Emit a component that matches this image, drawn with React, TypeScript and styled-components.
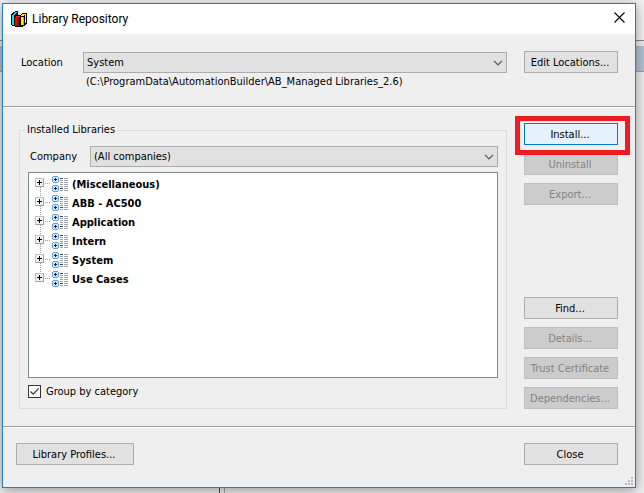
import React, { useState } from 'react';
import styled, { createGlobalStyle, css } from 'styled-components';

const uiFont = '"DejaVu Sans Condensed", "Noto Sans", sans-serif';

const GlobalStyle = createGlobalStyle`
  *, *::before, *::after { box-sizing: border-box; }
  body {
    margin: 0;
    color: #000;
    background: #efefef;
    font: 11px/14px ${uiFont};
  }
`;

const Desktop = styled.div`
  display: grid;
  grid-template: minmax(100vh, auto) / minmax(0, 1fr);
  overflow: hidden;
  > * { grid-area: 1 / 1; }
`;

const Backdrop = styled.div`
  display: flex;
  flex-direction: column;
`;

const BackToolbar = styled.div`
  height: 41px;
  border-bottom: 1px solid #84848a;
  background: #f4f4f4;
`;

const BackTabs = styled.div`
  height: 25px;
  margin-top: 5px;
  background: #b4c3d4;
`;

const BackPanes = styled.div`
  display: grid;
  grid-template-columns: 220px 4px 1fr;
  flex: 1;
  border-top: 1px solid #a0a0a0;
`;

const BackPane = styled.div<{ $edge?: 'left' | 'right' }>`
  ${p => p.$edge === 'left' && css`border-left: 1px solid #a8a8a8;`}
  ${p => p.$edge === 'right' && css`border-right: 1px solid #505050;`}
`;

const Dialog = styled.main`
  display: flex;
  flex-direction: column;
  margin: 3px 8px 5px 2px;
  border: 1px solid #1a7fcf;
  background: #efefef;
  box-shadow: 0 2px 12px rgba(0, 0, 0, 0.4);
`;

const TitleBar = styled.header`
  display: flex;
  align-items: center;
  height: 30px;
  padding: 0 8px;
  gap: 5px;
  background: #fff;
`;

const Title = styled.h1`
  flex: 1;
  margin: 0;
  font: 12px/16px Roboto, "Noto Sans", sans-serif;
`;

const CloseIconButton = styled.button`
  display: flex;
  padding: 0 2px 3px;
  border: 0;
  background: none;
`;

const Section = styled.section`
  display: grid;
  grid-template-columns: minmax(0, 1fr) 94px;
  column-gap: 17px;
  padding: 17px 17px 16px 16px;
  border-bottom: 1px solid #fff;
  box-shadow: inset 0 -1px #a0a0a0;
`;

const LocationSection = styled(Section)`
  height: 74px;
`;

const MainSection = styled(Section)`
  flex: 1;
  padding-top: 15px;
  padding-bottom: 18px;
`;

const Footer = styled.footer`
  position: relative;
  display: flex;
  justify-content: space-between;
  padding: 15px 17px 22px 13px;
`;

const Field = styled.div<{ $labelWidth: number }>`
  display: grid;
  grid-template-columns: ${p => p.$labelWidth}px minmax(0, 1fr);
  align-items: center;
`;

const LocationField = styled(Field)`
  padding: 1px 0 0 2px;
  align-content: start;
`;

const Path = styled.div`
  grid-column: 2;
  padding: 2px 3px;
`;

const SelectBox = styled.div`
  position: relative;
  display: flex;
  svg {
    position: absolute;
    right: 4px;
    top: 8px;
    pointer-events: none;
  }
`;

const Select = styled.select`
  width: 100%;
  height: 21px;
  padding: 1px 16px 0 3px;
  appearance: none;
  border: 1px solid #acacac;
  border-radius: 0;
  background: #e1e1e1;
  color: #000;
  font: inherit;
`;

const Button = styled.button<{ $primary?: boolean; $wide?: boolean }>`
  width: ${p => (p.$wide ? 118 : 94)}px;
  height: 22px;
  padding: 2px 2px 0 0;
  border: 1px solid ${p => (p.$primary ? '#0078d7' : '#adadad')};
  background: ${p => (p.$primary ? '#e5f1fb' : '#e1e1e1')};
  color: #000;
  font: inherit;
  white-space: nowrap;
  &:disabled {
    border-color: #bfbfbf;
    background: #ccc;
    color: #838383;
  }
`;

const Actions = styled.div`
  display: flex;
  flex-direction: column;
  justify-content: space-between;
`;

const ButtonGroup = styled.div`
  display: grid;
  gap: 8px;
`;

const Highlight = styled.div`
  position: relative;
  display: flex;
  &::after {
    content: '';
    position: absolute;
    inset: -7px -12px -10px -9px;
    border: 5px solid #ed1c24;
    pointer-events: none;
  }
`;

const Group = styled.fieldset`
  display: flex;
  flex-direction: column;
  min-width: 0;
  margin: 0;
  padding: 9px 8px 10px;
  border: 1px solid #dcdcdc;
`;

const Legend = styled.legend`
  margin-left: -3px;
  padding: 0 2px;
`;

const CompanyField = styled(Field)`
  padding-left: 2px;
`;

const Tree = styled.ul`
  flex: 1;
  margin: 5px 0 7px;
  padding: 1px 6px;
  border: 1px solid #828790;
  background: #fff;
  list-style: none;
`;

const TreeRow = styled.li`
  display: flex;
  align-items: center;
  height: 19px;
  font-weight: bold;
`;

const Expander = styled.button`
  display: flex;
  width: 17px;
  height: 19px;
  padding: 0;
  border: 0;
  background: none;
`;

const RowText = styled.span`
  padding: 2px 0 0 4px;
`;

const CheckLabel = styled.label`
  display: flex;
  align-items: center;
  gap: 5px;
  height: 13px;
`;

const CheckBox = styled.input`
  width: 13px;
  height: 13px;
  margin: 0;
  appearance: none;
  border: 1px solid #333;
  background: #fff;
  &:checked {
    background: #fff
      url("data:image/svg+xml,%3Csvg xmlns='http://www.w3.org/2000/svg' viewBox='0 0 11 11'%3E%3Cpath d='M1.5 5.5l2.7 2.7L9.7 2.3' fill='none' stroke='%23333' stroke-width='1.2'/%3E%3C/svg%3E");
  }
`;

const Grip = styled.svg`
  position: absolute;
  right: 2px;
  bottom: 2px;
`;

const Chevron = () => (
  <svg width="10" height="6" viewBox="0 0 10 6" aria-hidden="true">
    <path d="M1 .8l4 4 4-4" fill="none" stroke="#555" strokeWidth="1.2" />
  </svg>
);

const BooksIcon = () => (
  <svg width="16" height="16" viewBox="0 0 16 16" shapeRendering="crispEdges" aria-hidden="true">
    <path d="M0 3h1V2h1V1h2V0h3v4h3V3h1V2h5v11h-1v1h-1v1h-2v1H4v-1H1v-1H0z" fill="#000" />
    <path d="M1 4h2v10H1zM2 3h1V2h1V1h2v1H5v1H4v1H2z" fill="#00e8f0" />
    <path d="M4 6h4v9H4z" fill="#e8000c" />
    <path d="M5 5h4v1H5z" fill="#ff2020" />
    <path d="M7 7h1v8H7z" fill="#900000" />
    <path d="M9 6h4v8H9zM10 4h3v1h-3zM11 3h4v1h-4zM14 4h1v8h-1z" fill="#fff200" />
    <path d="M9 6h1v8H9zM13 5h1v9h-1z" fill="#000" />
    <path d="M12 6h1v8h-1z" fill="#c8b800" />
  </svg>
);

const ExpandIcon = ({ first, last }: { first: boolean; last: boolean }) => (
  <svg width="17" height="19" viewBox="0 0 17 19" shapeRendering="crispEdges" aria-hidden="true">
    {!first && <path d="M5.5 0v4" stroke="#a0a0a0" strokeDasharray="1 1" />}
    {!last && <path d="M5.5 13v6" stroke="#a0a0a0" strokeDasharray="1 1" />}
    <path d="M10 9.500h5" stroke="#a0a0a0" strokeDasharray="1 1" />
    <path d="M0 4h9v9H0z" fill="#b1c9c8" />
    <path d="M1 5h7v7H1z" fill="#f3f3ef" />
    <path d="M8 5h1v8H1v-1h7z" fill="#9aa6a6" />
    <path d="M2 8h5v1H2zM4 6h1v5H4z" fill="#000" />
  </svg>
);

const LibraryIcon = () => (
  <svg width="16" height="16" viewBox="0 0 16 16" shapeRendering="crispEdges" aria-hidden="true">
    {[0, 9].map(y => (
      <g key={y} transform={`translate(0 ${y})`}>
        <path d="M1 0h5v1h1v5H6v1H1V6H0V1h1z" fill="#6f9fd2" />
        <path d="M1 1h5v5H1z" fill="#cfe3fa" />
        <path d="M2 3h3v1H2zM3 2h1v3H3z" fill="#0c2040" />
      </g>
    ))}
    <path d="M8 2h3v1H8zM8 12h3v1H8z" fill="#444" />
    <path d="M8 4h3v1H8zM12 2h4v1h-4zM12 4h4v1h-4zM8 6h3v1H8zM12 6h4v1h-4zM8 8h3v1H8zM12 8h4v1h-4zM8 10h3v1H8zM12 10h4v1h-4zM12 12h4v1h-4zM8 14h3v1H8zM12 14h4v1h-4z" fill="#9ca3b0" />
  </svg>
);

const categories = ['(Miscellaneous)', 'ABB - AC500', 'Application', 'Intern', 'System', 'Use Cases'];

export default function App() {
  const [grouped, setGrouped] = useState(true);
  return (
    <Desktop>
      <GlobalStyle />
      <Backdrop aria-hidden="true">
        <BackToolbar />
        <BackTabs />
        <BackPanes>
          <BackPane $edge="right" />
          <BackPane />
          <BackPane $edge="left" />
        </BackPanes>
      </Backdrop>
      <Dialog>
        <TitleBar>
          <BooksIcon />
          <Title>Library Repository</Title>
          <CloseIconButton aria-label="Close window">
            <svg width="11" height="11" viewBox="0 0 11 11" aria-hidden="true">
              <path d="M.5.5l10 10M10.500.5l-10 10" stroke="#000" strokeWidth="1.1" />
            </svg>
          </CloseIconButton>
        </TitleBar>
        <LocationSection>
          <LocationField $labelWidth={62}>
            <label htmlFor="location">Location</label>
            <SelectBox>
              <Select id="location"><option>System</option></Select>
              <Chevron />
            </SelectBox>
            <Path>(C:\ProgramData\AutomationBuilder\AB_Managed Libraries_2.6)</Path>
          </LocationField>
          <Button>Edit Locations...</Button>
        </LocationSection>
        <MainSection>
          <Group>
            <Legend>Installed Libraries</Legend>
            <CompanyField $labelWidth={60}>
              <label htmlFor="company">Company</label>
              <SelectBox>
                <Select id="company"><option>(All companies)</option></Select>
                <Chevron />
              </SelectBox>
            </CompanyField>
            <Tree>
              {categories.map((name, i) => (
                <TreeRow key={name}>
                  <Expander aria-label={`Expand ${name}`}>
                    <ExpandIcon first={i === 0} last={i === categories.length - 1} />
                  </Expander>
                  <LibraryIcon />
                  <RowText>{name}</RowText>
                </TreeRow>
              ))}
            </Tree>
            <CheckLabel>
              <CheckBox type="checkbox" checked={grouped} onChange={e => setGrouped(e.target.checked)} />
              Group by category
            </CheckLabel>
          </Group>
          <Actions>
            <ButtonGroup>
              <Highlight><Button $primary>Install...</Button></Highlight>
              <Button disabled>Uninstall</Button>
              <Button disabled>Export...</Button>
            </ButtonGroup>
            <ButtonGroup>
              <Button>Find...</Button>
              <Button disabled>Details...</Button>
              <Button disabled>Trust Certificate</Button>
              <Button disabled>Dependencies...</Button>
            </ButtonGroup>
          </Actions>
        </MainSection>
        <Footer>
          <Button $wide>Library Profiles...</Button>
          <Button>Close</Button>
          <Grip width="8" height="8" viewBox="0 0 8 8" aria-hidden="true">
            <path d="M6 0h2v2H6zM3 3h2v2H3zM6 3h2v2H6zM0 6h2v2H0zM3 6h2v2H3zM6 6h2v2H6z" fill="#bcbcbc" />
          </Grip>
        </Footer>
      </Dialog>
    </Desktop>
  );
}
